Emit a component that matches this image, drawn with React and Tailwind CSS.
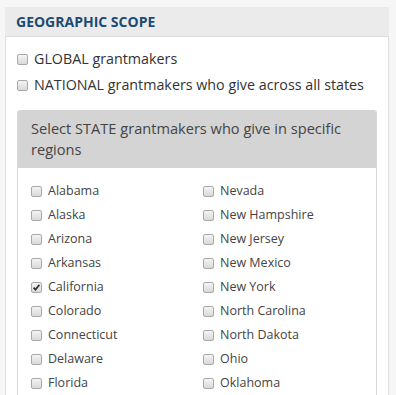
import React from 'react';

const leftStates = ['Alabama', 'Alaska', 'Arizona', 'Arkansas', 'California', 'Colorado', 'Connecticut', 'Delaware', 'Florida'];
const rightStates = ['Nevada', 'New Hampshire', 'New Jersey', 'New Mexico', 'New York', 'North Carolina', 'North Dakota', 'Ohio', 'Oklahoma'];

const Box = ({ checked }) => (
  <span className="relative inline-block w-[11px] h-[11px] shrink-0 rounded-[2px] border border-[#a9a9a9] bg-gradient-to-b from-[#f4f4f4] to-[#d9d9d9]">
    {checked && (
      <svg viewBox="0 0 11 11" className="absolute -left-px -top-px w-[11px] h-[11px]">
        <path d="M2.6 5.6 L4.5 7.6 L8.4 2.8" fill="none" stroke="#333" strokeWidth="1.8" />
      </svg>
    )}
  </span>
);

const StateRow = ({ name }) => (
  <div className="flex items-center h-6">
    <Box checked={name === 'California'} />
    <span className="ml-[6px] text-[12.5px] text-[#444]">{name}</span>
  </div>
);

const App = () => {
  return (
    <div className="w-[396px] h-[395px] overflow-hidden bg-[#f6f6f6] pt-[7px] pl-[5px] font-['Open_Sans','Liberation_Sans',sans-serif]">
      <div className="w-[384px]">
        {/* Header */}
        <div className="h-[30px] bg-[#ebebeb] border-b border-[#dcdcdc] flex items-center pl-[11px]">
          <h2 className="text-[14px] font-bold text-[#1b4b72]">GEOGRAPHIC SCOPE</h2>
        </div>

        {/* Body */}
        <div className="bg-white border-x border-[#e2e2e2] pl-[11px] pr-[11px] pt-[9px] h-[400px]">
          <div className="flex items-center h-[26px]">
            <Box />
            <span className="ml-[6px] text-[14.3px] text-[#333]">GLOBAL grantmakers</span>
          </div>
          <div className="flex items-center h-[26px]">
            <Box />
            <span className="ml-[6px] text-[14.3px] text-[#333]">NATIONAL grantmakers who give across all states</span>
          </div>

          <div className="mt-[12px] w-[360px] rounded-t-[3px] border-x border-[#d6d6d6]">
            <div className="bg-[#d4d4d4] rounded-t-[3px] px-[13px] pt-[8px] pb-[8px] h-[58px]">
              <p className="text-[14.6px] leading-[21px] text-[#444]">
                Select STATE grantmakers who give in specific regions
              </p>
            </div>
            <div className="grid grid-cols-[172px_1fr] pl-[13px] pt-[11px]">
              <div>
                {leftStates.map((s) => (
                  <StateRow key={s} name={s} />
                ))}
              </div>
              <div>
                {rightStates.map((s) => (
                  <StateRow key={s} name={s} />
                ))}
              </div>
            </div>
          </div>
        </div>
      </div>
    </div>
  );
};

export default App;
